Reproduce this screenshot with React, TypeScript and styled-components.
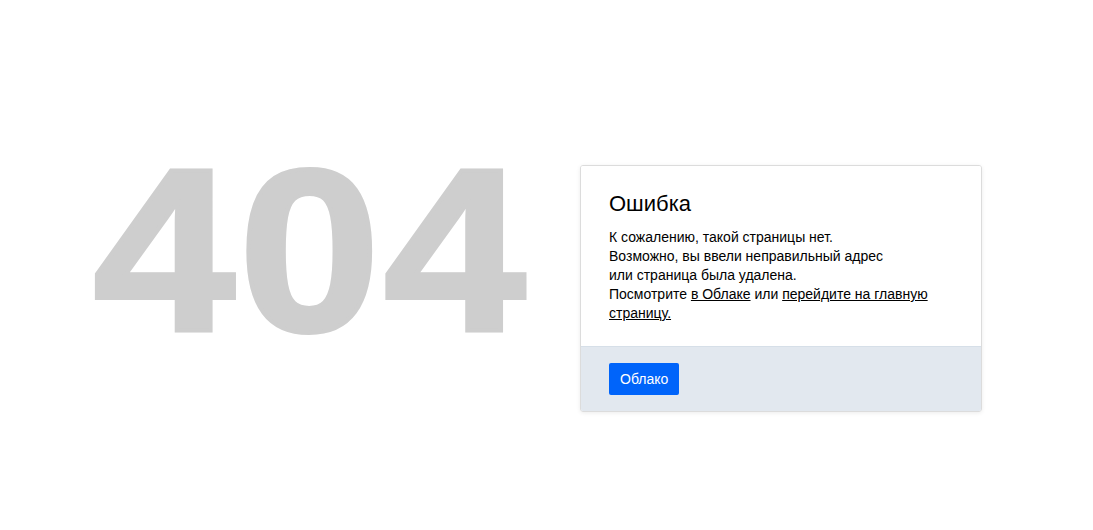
import styled, { createGlobalStyle } from "styled-components";

const GlobalStyle = createGlobalStyle`
  html, body {
    margin: 0;
    padding: 0;
    background: #fff;
  }
  body {
    font-family: "Liberation Sans", Arial, sans-serif;
    color: #000;
  }
`;

const Page = styled.div`
  display: flex;
  justify-content: center;
  align-items: flex-start;
  gap: 50px;
  padding-top: 135px;
  padding-right: 21px;
  height: 530px;
  box-sizing: border-box;
`;

const Code = styled.div`
  flex: 0 0 440px;
  box-sizing: border-box;
  padding-left: 3px;
  font-family: "Liberation Sans", Arial, sans-serif;
  font-weight: 700;
  font-size: 232px;
  line-height: 1;
  color: #cecece;
  -webkit-text-stroke: 4px #cecece;
  letter-spacing: 3px;
  white-space: nowrap;
  transform: scaleX(1.1);
  transform-origin: left center;
  user-select: none;
`;

const Card = styled.div`
  flex: 0 0 402px;
  margin-top: 30px;
  box-sizing: border-box;
  border: 1px solid #dcdcdc;
  border-radius: 3px;
  box-shadow: 0 1px 4px rgba(0, 0, 0, 0.08);
  overflow: hidden;
`;

const Body = styled.div`
  padding: 25px 28px 23px;
  background: #fff;
`;

const Title = styled.h1`
  margin: 0 0 11px;
  font-size: 22px;
  font-weight: 400;
  line-height: 26px;
`;

const Text = styled.p`
  margin: 0;
  font-size: 14px;
  line-height: 19px;
`;

const Link = styled.a`
  color: #000;
  text-decoration: underline;
`;

const Footer = styled.div`
  padding: 16px 28px 16px;
  background: #e2e8ef;
  border-top: 1px solid #d6dfe8;
`;

const Button = styled.button`
  height: 32px;
  padding: 0 11px;
  border: none;
  border-radius: 2px;
  background: #0064fa;
  color: #fff;
  font-family: "Liberation Sans", Arial, sans-serif;
  font-size: 14px;
  cursor: pointer;
`;

export default function App() {
  return (
    <>
      <GlobalStyle />
      <Page>
        <Code>404</Code>
        <Card>
          <Body>
            <Title>Ошибка</Title>
            <Text>
              К сожалению, такой страницы нет.
              <br />
              Возможно, вы ввели неправильный адрес
              <br />
              или страница была удалена.
              <br />
              Посмотрите <Link href="#">в Облаке</Link> или{" "}
              <Link href="#">перейдите на главную страницу.</Link>
            </Text>
          </Body>
          <Footer>
            <Button>Облако</Button>
          </Footer>
        </Card>
      </Page>
    </>
  );
}
